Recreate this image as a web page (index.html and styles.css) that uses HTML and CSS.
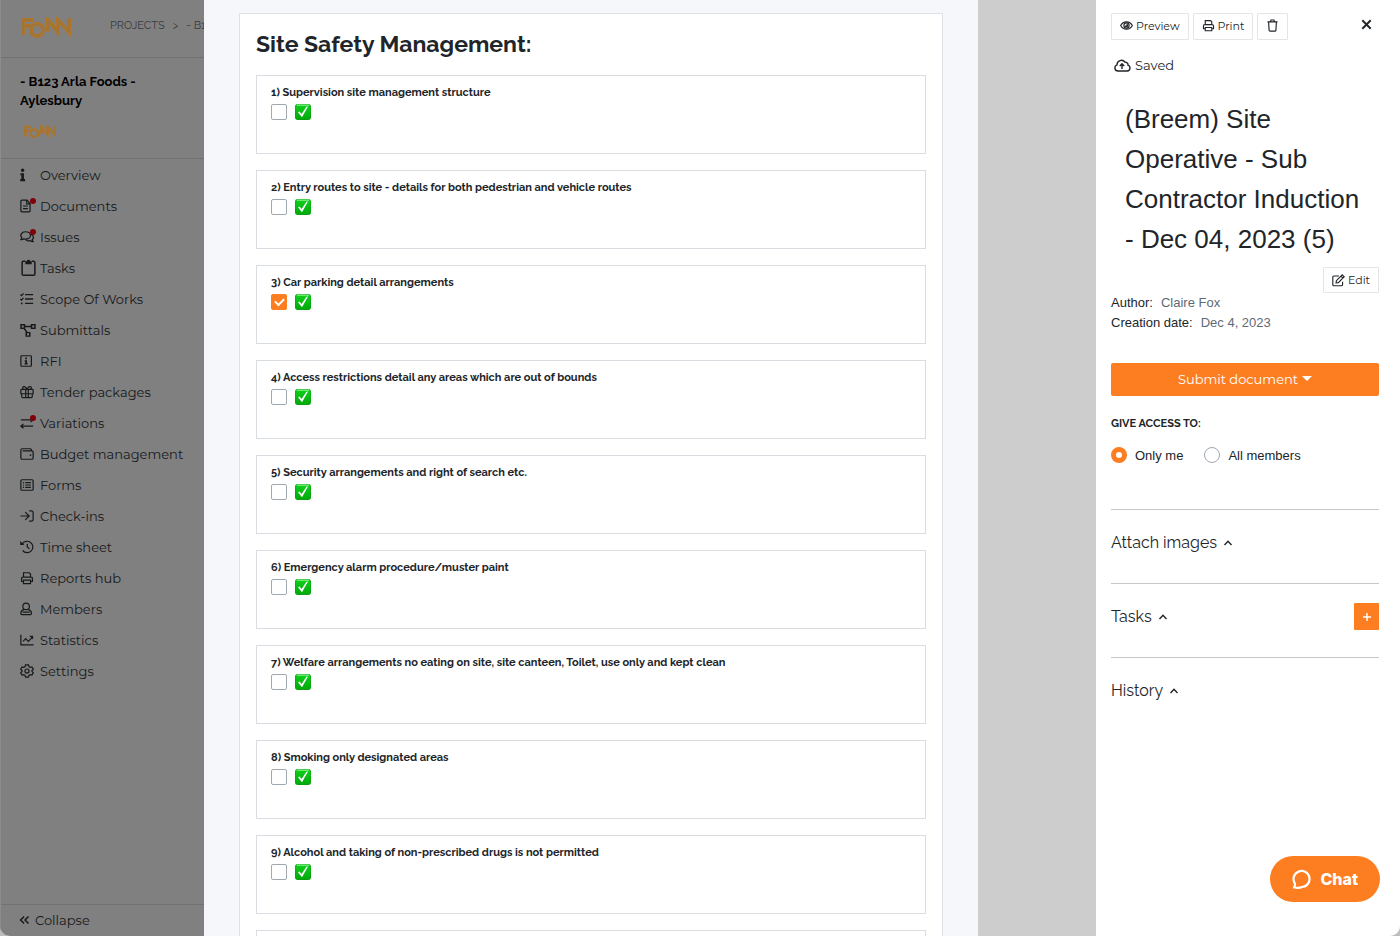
FILE: index.html
```html
<!DOCTYPE html>
<html lang="en">
<head>
<meta charset="utf-8">
<title>Site Safety Management</title>
<link rel="stylesheet" href="styles.css">
</head>
<body>
<svg class="sprite" aria-hidden="true">
  <defs>
    <linearGradient id="green" x1="0" y1="0" x2="0" y2="1"><stop offset="0" stop-color="#0fd11c"/><stop offset="1" stop-color="#00a80a"/></linearGradient>
    <symbol id="done" viewBox="0 0 16 16"><rect width="16" height="16" rx="3" fill="#0a9c12"/><rect x=".5" y=".5" width="15" height="15" rx="2.500" fill="url(#green)"/><path d="M2 1.200h12" stroke="#7be87f"/><path d="M3 8.200l1.600-.8 2 2.600 4.800-7.200 1.600-.2-6 10.600z" fill="#fff"/></symbol>
    <symbol id="logo" viewBox="0 0 52 22">
      <g fill="none" stroke="#b07626" stroke-width="4"><path d="M3 18V3h10M3 9h9"/><circle cx="17" cy="13" r="6"/><path d="M24 12.500h4V3l10 12V3l11 12V1"/></g>
      <g fill="none" stroke="#86735c" stroke-width=".8"><path d="M3 17.500V3h9.500M3 9h8"/><circle cx="17" cy="13" r="6"/><path d="M24 12.500h4V3l10 12V3l11 12V1"/></g>
    </symbol>
    <symbol id="printer" viewBox="0 0 16 16"><path d="M4 7V2h6.500L12 3.500V7M4 12H1.800V8.500A1.500 1.500 0 013.300 7h9.400a1.500 1.500 0 011.500 1.500V12H12M4 10.500h8v4H4z"/></symbol>
    <symbol id="up" viewBox="0 0 10 10"><path d="M1.500 7L5 3.200 8.500 7"/></symbol>
  </defs>
</svg>
<div class="window">
  <aside class="sidebar">
    <header class="topbar">
      <svg class="logo" role="img" aria-label="Fonn"><use href="#logo"/></svg>
      <nav class="crumbs"><a href="#">PROJECTS</a><span>&gt;</span><a href="#">- B123 Arla Foods</a></nav>
    </header>
    <div class="project">
      <h2>- B123 Arla Foods - Aylesbury</h2>
      <svg class="logo-small" role="img" aria-label="Fonn"><use href="#logo"/></svg>
    </div>
    <nav class="menu">
      <a href="#"><svg class="icon" viewBox="0 0 16 16"><g class="solid"><circle cx="3" cy="2.600" r="1.900"/><path d="M.5 6h4v6.500h1.300V15H.3v-2.500h1.200V8.300H.5z"/></g></svg>Overview</a>
      <a href="#"><svg class="icon" viewBox="0 0 16 16"><path d="M1 2.500A1.200 1.200 0 012.200 1.300H8L11.500 5v8.500a1.200 1.200 0 01-1.200 1.200H2.200A1.200 1.200 0 011 13.500zM7.700 1.500v4h3.600M3.500 8h5.500M3.500 11h5.500"/></svg><i class="dot"></i>Documents</a>
      <a href="#"><svg class="icon" viewBox="0 0 16 16"><path d="M1 11c1-.8 1.200-1.500 1.200-2C-.6 6 1.800 2 6 2s6 2.300 6 4.300-2.200 4.200-6 4.200c-.6 0-1.300-.1-1.800-.3C3.300 10.800 2.200 11 1 11zM12.500 5c3.600 1.200 3.400 4.500 1.500 5.800 0 1 .4 1.700 1 2.400-1.300 0-2.400-.4-3.100-1-2.100.6-4 .2-5.100-1"/></svg><i class="dot"></i>Issues</a>
      <a href="#"><svg class="icon icon-clip" viewBox="0 0 16 16"><path d="M5 2.200H3.200A1.200 1.200 0 002 3.400v10.700a1.200 1.200 0 001.200 1.200h9.600a1.200 1.200 0 001.200-1.200V3.400a1.200 1.200 0 00-1.200-1.200H11"/><path class="solid" d="M5 2h1.300a1.800 1.800 0 013.400 0H11v3H5z"/></svg>Tasks</a>
      <a href="#"><svg class="icon" viewBox="0 0 16 16"><path d="M5.800 3H15M5.800 8H15M5.800 13H15" stroke-width="1.700"/><path d="M.5 3l1.200 1.200L4 1.700M.5 8l1.200 1.200L4 6.700"/><circle class="solid" cx="2" cy="13" r="1"/></svg>Scope Of Works</a>
      <a href="#"><svg class="icon icon-wide" viewBox="0 0 18 16"><path d="M1 2h4v4H1zM13 2h4v4h-4zM7 11h4v4H7zM5 4h8M4.500 6l3.500 5" stroke-width="1.700"/></svg>Submittals</a>
      <a href="#"><svg class="icon" viewBox="0 0 16 16"><rect x="1" y="2" width="12" height="12" rx="1"/><path class="solid" d="M6 4h2v2H6zM5.300 7H8v3.500h.8V12H5.200v-1.500H6v-2h-.7z"/></svg>RFI</a>
      <a href="#"><svg class="icon" viewBox="0 0 16 16"><path d="M1 10V6a1 1 0 011-1h12a1 1 0 011 1v4zM2 10v3.500a1 1 0 001 1h10a1 1 0 001-1V10M6.500 5v9.500M9.500 5v9.500M8 5C6.500 1.500 3 .8 3 3.200 3 4.500 4 5 5 5M8 5c1.500-3.500 5-4.200 5-1.800C13 4.500 12 5 11 5"/></svg>Tender packages</a>
      <a href="#"><svg class="icon" viewBox="0 0 16 16"><path d="M1 4.500h14M12 2l3 2.500L12 7M15 11.500H1M4 9l-3 2.500L4 14"/></svg><i class="dot"></i>Variations</a>
      <a href="#"><svg class="icon" viewBox="0 0 16 16"><path d="M13 4.500V3.200A1.200 1.200 0 0011.800 2H2.500A1.500 1.500 0 001 3.500v9A1.500 1.500 0 002.500 14h11a1.500 1.500 0 001.500-1.500V6a1.500 1.500 0 00-1.500-1.500H3"/><circle class="solid" cx="12" cy="9.200" r="1"/></svg>Budget management</a>
      <a href="#"><svg class="icon" viewBox="0 0 16 16"><rect x="1" y="2" width="14" height="12" rx="1.200"/><path d="M6 5.200h6.500M6 8h6.500M6 10.800h6.500M3.300 5.200h1.400M3.300 8h1.400M3.300 10.800h1.400"/></svg>Forms</a>
      <a href="#"><svg class="icon" viewBox="0 0 16 16"><path d="M.5 8H10M6 3.500L10.500 8 6 12.500M10.500 2.200h2.700A1.800 1.800 0 0115 4v8a1.800 1.800 0 01-1.800 1.800h-2.700"/></svg>Check-ins</a>
      <a href="#"><svg class="icon" viewBox="0 0 16 16"><path d="M2.500 4.800a6.500 6.500 0 11.600 7.200M8.300 4.200V8l2.500 2"/><path class="solid" d="M.3 1.200L5 5.800H.3z"/></svg>Time sheet</a>
      <a href="#"><svg class="icon"><use href="#printer"/></svg>Reports hub</a>
      <a href="#"><svg class="icon" viewBox="0 0 16 16"><circle cx="7" cy="5" r="3.700"/><path d="M4.500 8.700C2 9.300 1 10.500 1 12.500v1a1 1 0 001 1h10a1 1 0 001-1v-1c0-2-1-3.200-3.500-3.800M3 11.500h8"/></svg>Members</a>
      <a href="#"><svg class="icon" viewBox="0 0 16 16"><path d="M1 2v11.500h14.500M3.500 9.500l3-3 3 3L14 5"/><path class="solid" d="M10.500 3h4.500v4.500z"/></svg>Statistics</a>
      <a href="#"><svg class="icon" viewBox="0 0 16 16"><path d="M6.300 1h3.400l.5 2 1.500.9 2-.6 1.500 2.700L13.700 7.500v1l1.500 1.500-1.500 2.700-2-.6-1.500.9-.5 2H6.300l-.5-2-1.500-.9-2 .6L.8 10l1.500-1.500v-1L.8 6l1.500-2.700 2 .6L5.800 3z"/><circle cx="8" cy="8" r="2.300"/></svg>Settings</a>
    </nav>
    <button class="collapse" type="button"><svg class="icon" viewBox="0 0 16 16"><path d="M7 4L3 8l4 4M12 4L8 8l4 4" stroke-width="1.700"/></svg>Collapse</button>
  </aside>

  <main class="workspace">
    <section class="sheet">
      <h1>Site Safety Management:</h1>
      <div class="question"><label for="q1">1) Supervision site management structure</label><div class="answer"><input type="checkbox" id="q1"><svg class="done"><use href="#done"/></svg></div></div>
      <div class="question"><label for="q2">2) Entry routes to site - details for both pedestrian and vehicle routes</label><div class="answer"><input type="checkbox" id="q2"><svg class="done"><use href="#done"/></svg></div></div>
      <div class="question"><label for="q3">3) Car parking detail arrangements</label><div class="answer"><input type="checkbox" id="q3" checked><svg class="done"><use href="#done"/></svg></div></div>
      <div class="question"><label for="q4">4) Access restrictions detail any areas which are out of bounds</label><div class="answer"><input type="checkbox" id="q4"><svg class="done"><use href="#done"/></svg></div></div>
      <div class="question"><label for="q5">5) Security arrangements and right of search etc.</label><div class="answer"><input type="checkbox" id="q5"><svg class="done"><use href="#done"/></svg></div></div>
      <div class="question"><label for="q6">6) Emergency alarm procedure/muster paint</label><div class="answer"><input type="checkbox" id="q6"><svg class="done"><use href="#done"/></svg></div></div>
      <div class="question"><label for="q7">7) Welfare arrangements no eating on site, site canteen, Toilet, use only and kept clean</label><div class="answer"><input type="checkbox" id="q7"><svg class="done"><use href="#done"/></svg></div></div>
      <div class="question"><label for="q8">8) Smoking only designated areas</label><div class="answer"><input type="checkbox" id="q8"><svg class="done"><use href="#done"/></svg></div></div>
      <div class="question"><label for="q9">9) Alcohol and taking of non-prescribed drugs is not permitted</label><div class="answer"><input type="checkbox" id="q9"><svg class="done"><use href="#done"/></svg></div></div>
      <div class="question"></div>
    </section>
  </main>

  <aside class="panel">
    <div class="tools">
      <button class="tool" type="button"><svg class="icon-s" viewBox="0 0 16 16"><path d="M.8 8C4 2 12 2 15.200 8 12 14 4 14 .8 8z"/><circle cx="8" cy="8" r="3.200"/><path class="solid" d="M8 5.800A2.200 2.200 0 115.800 8H8z"/></svg>Preview</button>
      <button class="tool" type="button"><svg class="icon-s"><use href="#printer"/></svg>Print</button>
      <button class="tool" type="button" aria-label="Delete"><svg class="icon-s" viewBox="0 0 16 16"><path d="M1.800 3.500h12.400M5.300 3.300L6.300 1.200h3.400l1 2.100M3.200 3.700l.6 10a1.200 1.200 0 001.200 1.200h6a1.200 1.200 0 001.200-1.200l.6-10"/></svg></button>
      <button class="close" type="button" aria-label="Close"><svg class="icon-x" viewBox="0 0 10 10"><path d="M1.200 1.200l7.600 7.600M8.800 1.200L1.200 8.800"/></svg></button>
    </div>
    <p class="saved"><svg class="icon-cloud" viewBox="0 0 17 13"><path d="M4 12a3.200 3.200 0 01-1-6.200A4.400 4.400 0 0111 3.200a2.600 2.600 0 013 3A3 3 0 0113.300 12zM8 10V5M5.800 7L8 4.800 10.200 7"/></svg>Saved</p>
    <h2 class="title">(Breem) Site Operative - Sub Contractor Induction - Dec 04, 2023 (5)</h2>
    <button class="tool edit" type="button"><svg class="icon-s" viewBox="0 0 16 16"><path d="M8.500 2.500H2.200A1.200 1.200 0 001 3.700v9.600a1.200 1.200 0 001.200 1.200h9.600a1.200 1.200 0 001.200-1.200V9.500M5 11l.4-2.800L12.600 1l2.400 2.400-7.200 7.200zM11 2.600L13.400 5"/></svg>Edit</button>
    <dl class="facts">
      <div><dt>Author:</dt><dd>Claire Fox</dd></div>
      <div><dt>Creation date:</dt><dd>Dec 4, 2023</dd></div>
    </dl>
    <button class="submit" type="button">Submit document<span class="caret"></span></button>
    <fieldset class="access">
      <legend>GIVE ACCESS TO:</legend>
      <div class="choices">
        <label><input type="radio" name="access" checked>Only me</label>
        <label><input type="radio" name="access">All members</label>
      </div>
    </fieldset>
    <section class="fold"><h3>Attach images<svg class="icon-up"><use href="#up"/></svg></h3></section>
    <section class="fold"><h3>Tasks<svg class="icon-up"><use href="#up"/></svg></h3><button class="add" type="button" aria-label="Add task"><svg class="icon-plus" viewBox="0 0 8 8"><path d="M4 0v8M0 4h8"/></svg></button></section>
    <section class="fold"><h3>History<svg class="icon-up"><use href="#up"/></svg></h3></section>
  </aside>
</div>
<button class="chat" type="button"><svg class="icon-chat" viewBox="0 0 20 20"><path d="M2 18.500c1-1.300 1.200-2.500.9-4A8 8 0 1110 18c-2.500 1.300-5 1-8 .5z"/></svg>Chat</button>
</body>
</html>
```
FILE: styles.css
```css
* { box-sizing: border-box; }

body {
  margin: 0;
  background: #bdbdbd;
  color: #212529;
  font-family: Montserrat, Inter, sans-serif;
  font-size: 13px;
}

h1, h2, h3, p, dl, dd { margin: 0; }
a { color: inherit; text-decoration: none; }
button { font: inherit; color: inherit; cursor: pointer; }

svg { flex: none; fill: none; stroke: currentColor; stroke-width: 1.4; }
.solid { fill: currentColor; stroke: none; }
.sprite { position: absolute; width: 0; height: 0; }

.window {
  display: grid;
  grid-template-columns: 204px minmax(0, 1fr) 304px;
  height: 100vh;
  overflow: hidden;
  border-radius: 0 0 10px 10px;
  background: #cdcdcd;
}

/* Sidebar */
.sidebar {
  display: flex;
  flex-direction: column;
  overflow: hidden;
  background: #808080;
  border-left: 1px solid #8c8c8c;
  color: #17191b;
}
.topbar {
  display: flex;
  gap: 38px;
  height: 58px;
  padding: 17px 0 0 19px;
  border-bottom: 1px solid #727272;
}
.logo { width: 52px; height: 22px; }
.logo-small { width: 34px; height: 14px; margin: 15px 0 0 3px; display: block; }
.crumbs {
  display: flex;
  gap: 8px;
  font: 11px/18px Raleway, "Open Sans", sans-serif;
  color: #363b40;
  white-space: nowrap;
}
.project { height: 101px; padding: 14px 40px 0 19px; border-bottom: 1px solid #727272; }
.project h2 { font: 700 13px/19px Raleway, "Open Sans", sans-serif; color: #000; }
.menu { display: flex; flex-direction: column; flex: 1; }
.menu a {
  position: relative;
  display: grid;
  grid-template-columns: 20px 1fr;
  align-items: center;
  height: 31px;
  padding-left: 19px;
}
.icon { width: 14px; height: 14px; }
.icon-clip { width: 17px; height: 17px; }
.icon-wide { width: 16px; }
.dot {
  position: absolute;
  left: 29px;
  top: 8px;
  width: 6px;
  height: 6px;
  border-radius: 50%;
  background: #80000b;
}
.collapse {
  display: flex;
  align-items: center;
  gap: 3px;
  height: 32px;
  padding: 0 17px 2px;
  border: 0;
  border-top: 1px solid #727272;
  background: none;
  font-size: 13px;
}

/* Form sheet */
.workspace {
  overflow: hidden;
  margin-right: 118px;
  padding: 13px 35px 0;
  background: #f6f7fa;
}
.sheet {
  display: flex;
  flex-direction: column;
  gap: 16px;
  padding: 14px 16px;
  border: 1px solid #dee2e6;
  background: #fff;
}
.sheet h1 { font: 700 23px/31px Raleway, "Open Sans", sans-serif; }
.question { min-height: 79px; padding: 9px 14px; border: 1px solid #d9dce0; }
.question label { display: block; font: 700 11px/16px Raleway, "Open Sans", sans-serif; }
.answer { display: flex; gap: 8px; margin-top: 3px; }
.done { width: 16px; height: 16px; stroke: none; }

input { appearance: none; display: grid; place-content: center; width: 16px; height: 16px; margin: 0; border: 1px solid #a0a8b0; background: #fff; }
input[type="checkbox"] { border-radius: 2px; }
input[type="checkbox"]:checked { border-color: #fd7e20; background: #fd7e20; }
input[type="checkbox"]:checked::before {
  content: "";
  width: 7px;
  height: 4px;
  border: solid #fff;
  border-width: 0 0 2px 2px;
  transform: translateY(-1px) rotate(-45deg);
}
input[type="radio"] { border-radius: 50%; }
input[type="radio"]:checked { border: 5px solid #fd7e20; }

/* Document panel */
.panel {
  display: flex;
  flex-direction: column;
  padding: 13px 21px 0 15px;
  background: #fff;
  font-family: "Liberation Sans", Arial, sans-serif;
}
.tools { display: flex; gap: 4px; }
.tool {
  display: flex;
  align-items: center;
  gap: 3px;
  height: 27px;
  padding: 0 8px 2px;
  border: 1px solid #e3e6e9;
  border-radius: 1px;
  background: #fff;
  font: 11px Montserrat, Inter, sans-serif;
}
.icon-s { width: 13px; height: 13px; }
.close { display: flex; align-self: flex-start; margin-left: auto; padding: 6px 7px; border: 0; background: none; }
.icon-x { width: 11px; height: 11px; stroke-width: 1.8; }
.saved { display: flex; align-items: center; gap: 4px; height: 20px; margin: 15px 0 0 3px; font-family: Montserrat, Inter, sans-serif; }
.icon-cloud { width: 17px; height: 13px; stroke-width: 1.4; }
.title { margin: 24px 0 8px; padding: 0 14px; font-size: 26px; font-weight: 400; line-height: 40px; }
.edit { align-self: flex-end; height: 26px; padding-bottom: 0; }
.facts { line-height: 20px; }
.facts div { display: flex; gap: 8px; }
.facts dd { color: #5f6973; }
.submit {
  display: flex;
  align-items: center;
  justify-content: center;
  gap: 4px;
  height: 33px;
  margin-top: 30px;
  padding: 0 0 2px;
  border: 0;
  border-radius: 2px;
  background: #fd7e20;
  color: #fff;
  font: 13px Montserrat, Inter, sans-serif;
}
.caret { border: 5px solid transparent; border-top-color: #fff; border-bottom: 0; }
.access { margin: 20px 0 46px; padding: 0; border: 0; }
.access legend { padding: 0; font: 700 11px/16px Raleway, "Open Sans", sans-serif; }
.choices { display: flex; gap: 21px; margin-top: 15px; }
.choices label { display: flex; align-items: center; gap: 8px; }
.fold {
  display: flex;
  align-items: center;
  justify-content: space-between;
  height: 74px;
  padding-bottom: 8px;
  border-top: 1px solid #c8c8c8;
}
.fold h3 { display: flex; align-items: center; gap: 6px; font: 400 16px/22px Raleway, "Open Sans", sans-serif; }
.icon-up { width: 10px; height: 10px; }
.add { display: grid; place-content: center; width: 25px; height: 27px; padding: 0; border: 0; border-radius: 1px; background: #fd7e20; color: #fff; }
.icon-plus { width: 8px; height: 8px; }

.chat {
  position: fixed;
  right: 20px;
  bottom: 34px;
  display: flex;
  align-items: center;
  gap: 8px;
  height: 46px;
  padding: 0 22px;
  border: 0;
  border-radius: 23px;
  background: #fd7e20;
  color: #fff;
  font: 800 16px Inter, Roboto, sans-serif;
}
.icon-chat { width: 20px; height: 20px; stroke-width: 2.2; stroke-linejoin: round; }
```
